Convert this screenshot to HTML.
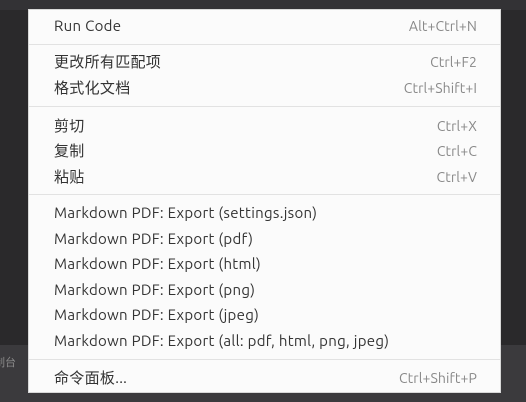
<!DOCTYPE html>
<html><head><meta charset="utf-8"><style>
html,body{margin:0;padding:0;width:526px;height:402px;overflow:hidden;background:#2a292b;font-family:"Ubuntu","Liberation Sans","Noto Sans CJK SC",sans-serif;}
.top{position:absolute;left:0;top:0;width:526px;height:10px;background:#333235;}
.bot{position:absolute;left:0;top:345px;width:526px;height:57px;background:#3b3a3d;}
.bot span{position:absolute;left:-6px;top:9px;font-size:11px;color:#8a8a8a;}
.menu{position:absolute;left:28px;top:9px;width:473px;height:384px;background:#fbfbfb;border:1px solid #d8d8d8;box-sizing:border-box;}
.it{position:absolute;left:25px;right:23px;height:20px;font-size:15px;line-height:20px;color:#333;letter-spacing:0.3px;}
.it b{font-weight:normal;position:absolute;right:0;top:0;color:#888;font-size:14px;letter-spacing:0.1px;}
.sep{position:absolute;left:0;right:0;height:1px;background:#e2e2e2;}
</style></head><body>
<div class="top"></div>
<div class="bot"><span>制台</span></div>
<div class="menu">
<div class="it" style="top:6px">Run Code<b>Alt+Ctrl+N</b></div>
<div class="sep" style="top:34px"></div>
<div class="it" style="top:42px">更改所有匹配项<b>Ctrl+F2</b></div>
<div class="it" style="top:68px">格式化文档<b>Ctrl+Shift+I</b></div>
<div class="sep" style="top:96px"></div>
<div class="it" style="top:106px">剪切<b>Ctrl+X</b></div>
<div class="it" style="top:131px">复制<b>Ctrl+C</b></div>
<div class="it" style="top:157px">粘贴<b>Ctrl+V</b></div>
<div class="sep" style="top:184px"></div>
<div class="it" style="top:193px">Markdown PDF: Export (settings.json)</div>
<div class="it" style="top:219px">Markdown PDF: Export (pdf)</div>
<div class="it" style="top:244px">Markdown PDF: Export (html)</div>
<div class="it" style="top:270px">Markdown PDF: Export (png)</div>
<div class="it" style="top:295px">Markdown PDF: Export (jpeg)</div>
<div class="it" style="top:321px">Markdown PDF: Export (all: pdf, html, png, jpeg)</div>
<div class="sep" style="top:349px"></div>
<div class="it" style="top:358px">命令面板...<b>Ctrl+Shift+P</b></div>
</div>
</body></html>
